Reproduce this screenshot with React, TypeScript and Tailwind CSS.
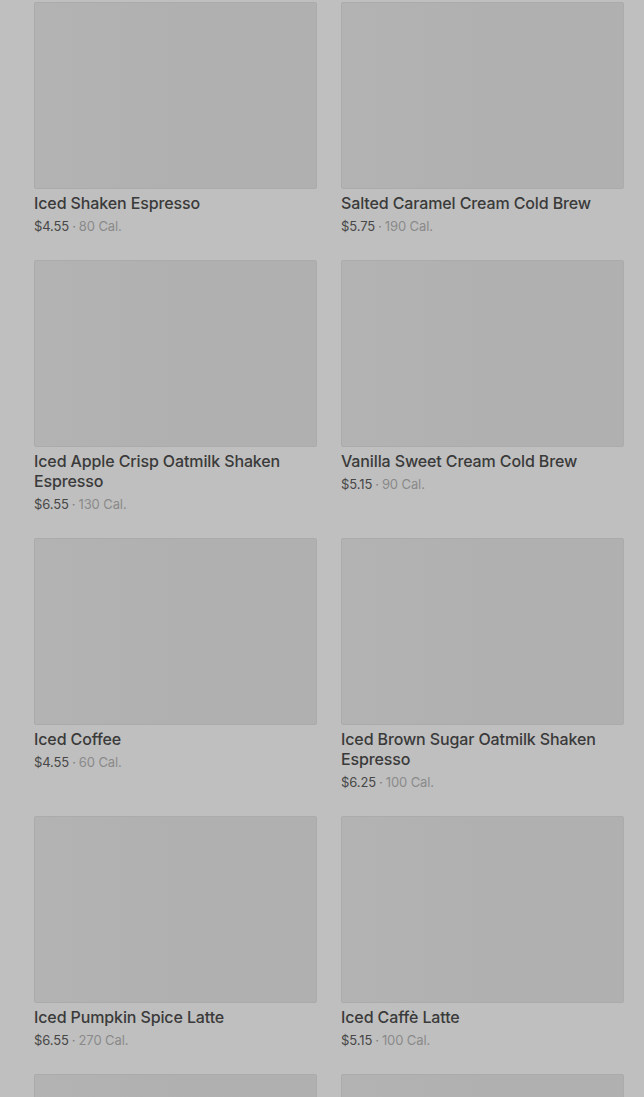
const drinks = [
  { name: "Iced Shaken Espresso", price: "$4.55", cal: "80 Cal." },
  { name: "Salted Caramel Cream Cold Brew", price: "$5.75", cal: "190 Cal." },
  { name: "Iced Apple Crisp Oatmilk Shaken Espresso", price: "$6.55", cal: "130 Cal." },
  { name: "Vanilla Sweet Cream Cold Brew", price: "$5.15", cal: "90 Cal." },
  { name: "Iced Coffee", price: "$4.55", cal: "60 Cal." },
  { name: "Iced Brown Sugar Oatmilk Shaken Espresso", price: "$6.25", cal: "100 Cal." },
  { name: "Iced Pumpkin Spice Latte", price: "$6.55", cal: "270 Cal." },
  { name: "Iced Caffè Latte", price: "$5.15", cal: "100 Cal." },
  { name: "", price: "", cal: "" },
  { name: "", price: "", cal: "" },
];

function DrinkCard({ name, price, cal }: { name: string; price: string; cal: string }) {
  return (
    <div className="flex flex-col">
      <div className="h-[187px] w-full rounded-[2px] border border-[#ababab] bg-gradient-to-r from-[#b3b3b3] via-[#b0b0b0] to-[#b0b0b0]" />
      {name && (
        <div className="mt-[4px] pb-[25px]">
          <h2 className="text-[16px] leading-[20px] font-medium text-[#3a3a3a] tracking-[-0.12px]">{name}</h2>
          <p className="mt-[4px] text-[13px] leading-[18px] text-[#8a8a8a] tracking-[-0.1px]">
            <span className="text-[#474747]">{price}</span>
            <span className="mx-[3px] text-[#7a7a7a]">·</span>
            {cal}
          </p>
        </div>
      )}
    </div>
  );
}

export default function App() {
  return (
    <div
      className="h-[1097px] overflow-hidden bg-[#bfbfbf] pl-[34px] pr-[20px] pt-[2px]"
      style={{ fontFamily: "Inter, 'Noto Sans', sans-serif" }}
    >
      <div className="grid grid-cols-2 gap-x-[24px]">
        {drinks.map((d, i) => (
          <DrinkCard key={i} {...d} />
        ))}
      </div>
    </div>
  );
}
